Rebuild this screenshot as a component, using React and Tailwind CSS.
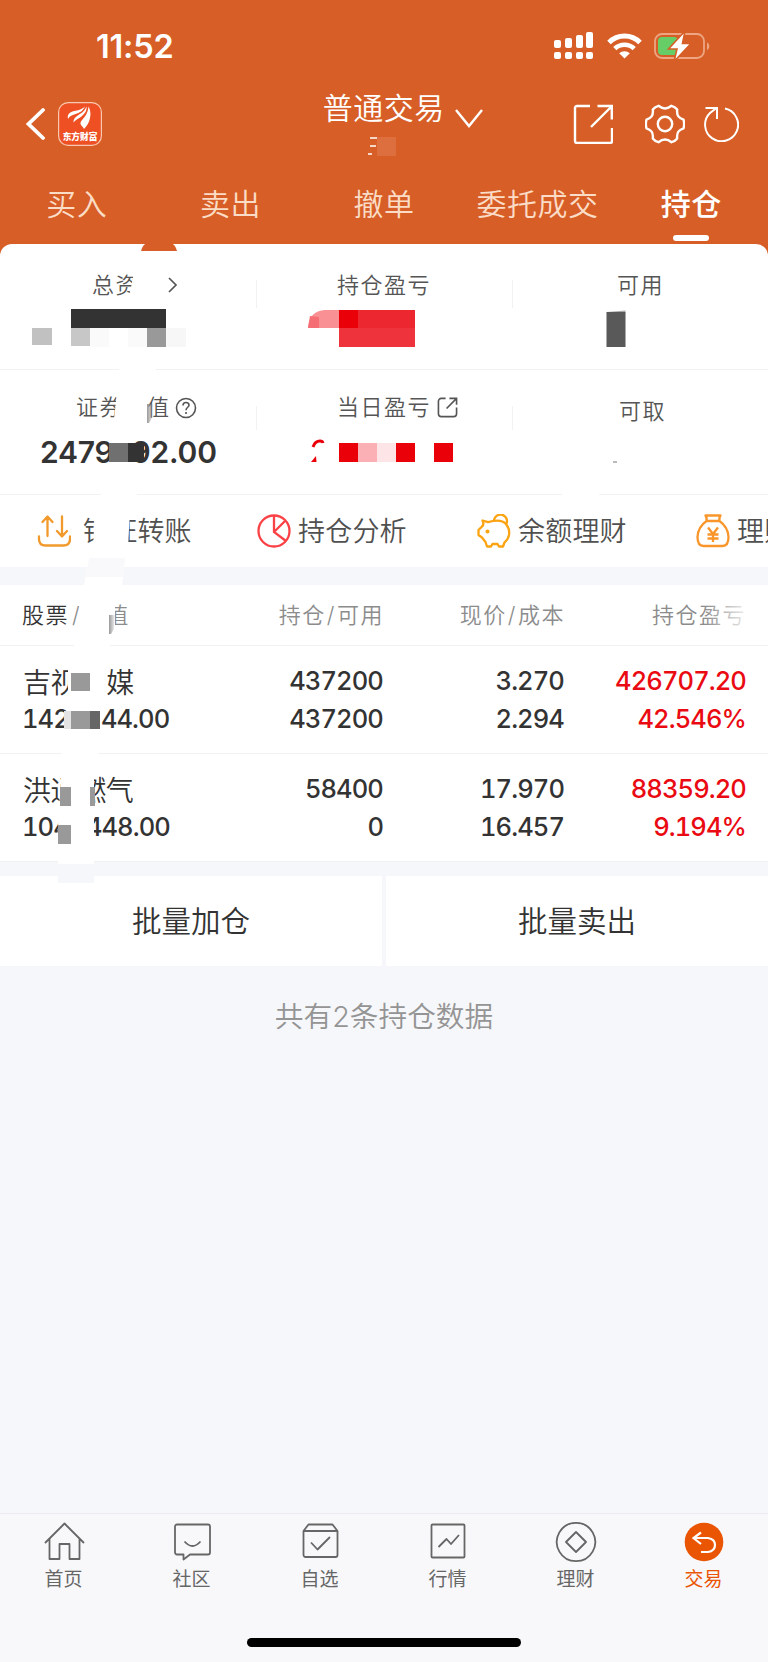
import React from 'react';

const TABS = ['买入', '卖出', '撤单', '委托成交', '持仓'];

const HOLDINGS = [
  {
    name: ['吉视', '媒'],
    value: ['142', '44.00'],
    amount: '437200',
    available: '437200',
    price: '3.270',
    cost: '2.294',
    profit: '426707.20',
    percent: '42.546%',
  },
  {
    name: ['洪通', '燃气'],
    value: ['104', '448.00'],
    amount: '58400',
    available: '0',
    price: '17.970',
    cost: '16.457',
    profit: '88359.20',
    percent: '9.194%',
  },
];

const StatusBar = () => (
  <div className="flex h-[92px] items-center justify-between pl-[96px] pr-[57px]">
    <div className="pt-[2px] text-[32.5px] font-semibold leading-none tracking-[-0.2px]">11:52</div>
    <div className="flex items-center gap-[12.5px] pb-px">
      <svg className="h-7 w-10" viewBox="0 0 40 28" fill="#fff">
        <rect x="0" y="8" width="7" height="8" rx="2" />
        <rect x="11" y="6" width="7" height="10" rx="2" />
        <rect x="22" y="3" width="7" height="13" rx="2" />
        <rect x="32" y="0" width="7" height="16" rx="2" />
        <rect x="0" y="20" width="7" height="7" rx="2" />
        <rect x="11" y="20" width="7" height="7" rx="2" />
        <rect x="22" y="20" width="7" height="7" rx="2" />
        <rect x="32" y="20" width="7" height="7" rx="2" />
      </svg>
      <svg className="h-[26px] w-[35px]" viewBox="0 0 35 26" fill="none" stroke="#fff">
        <path d="M2 9.5a22 22 0 0 1 31 0" strokeWidth="5" />
        <path d="M7.8 15.6a14 14 0 0 1 19.4 0" strokeWidth="4.6" />
        <path d="M17.5 25.5l-5.3-5.2a7.6 7.6 0 0 1 10.6 0z" fill="#fff" stroke="none" />
      </svg>
      <svg className="h-7 w-[57px] overflow-visible" viewBox="0 0 57 28" fill="none">
        <rect x="1" y="2" width="49" height="24" rx="7" stroke="#EDA582" strokeWidth="1.8" />
        <path d="M53 10.5c3 .8 3 6.7 0 7.5z" fill="#EDA582" />
        <rect x="4" y="5" width="20" height="18" rx="4" fill="#67CE67" />
        <path d="M31 -1L14.5 17H23L20 29.500L37 11.500H28.500z" fill="#fff" stroke="#D75F27" strokeWidth="1.6" />
      </svg>
    </div>
  </div>
);

const AppLogo = () => (
  <svg className="h-11 w-11" viewBox="0 0 44 44">
    <rect x="0.6" y="0.6" width="42.8" height="42.8" rx="9.5" fill="#EE5024" stroke="#F8C8B0" strokeWidth="1.2" />
    <g fill="#fff">
      <path d="M10 17c-1-5 2-7 6-8 4-.8 7-1 11-4.5-2 4-4 5.500-8 7-4 1.300-7 2-9 5.500z" />
      <path d="M15.500 20.500c0-4 2-5.500 5-7.500 4-2.500 6-4 8-8.500.5 4-1.500 7-5 10-3 2.500-6 3-8 6z" />
      <path d="M26 27c-1-3-5-4-3-7.500 2-3 7-7 7.500-15 3 5 2 11 .5 15-1 3-3 5-5 7.500z" />
    </g>
    <text x="22" y="37.500" textAnchor="middle" fontSize="8.700" fontWeight="900" fill="#fff">东方财富</text>
  </svg>
);

const NavBar = () => (
  <div className="-mt-px mb-px flex h-[66px] items-center">
    <div className="flex w-[256px] items-center gap-[13px] pl-[25px]">
      <svg className="h-[34px] w-5" viewBox="0 0 20 34" fill="none" stroke="#fff" strokeWidth="3.8">
        <path d="M18 3L3.500 17l14.500 14" strokeLinecap="round" strokeLinejoin="miter" />
      </svg>
      <AppLogo />
    </div>
    <div className="flex w-[256px] items-start justify-center pb-[29px] pl-[38px]">
      <span className="text-[30px] font-[350] leading-9 tracking-[0.5px]">普通交易</span>
      <svg className="ml-[10.5px] mt-[19px] h-5 w-7" viewBox="0 0 28 20" fill="none" stroke="#fff" strokeWidth="2.4">
        <path d="M1 1l13 16L27 1" />
      </svg>
    </div>
    <div className="flex w-[256px] items-center pl-[61px]">
      <svg className="h-10 w-10" viewBox="0 0 40 40" fill="none" stroke="#fff" strokeWidth="2.4">
        <path d="M17 2H4a2 2 0 0 0-2 2v33a2 2 0 0 0 2 2h33a2 2 0 0 0 2-2V24M24.500 2H38.800V15.500M38.500 2.500L18 23" />
      </svg>
      <svg className="ml-[32px] h-10 w-10" viewBox="0 0 40 40" fill="none" stroke="#fff" strokeWidth="2.4" strokeLinejoin="round">
        <path d="M13.500 1.800Q20 7 26.500 1.800Q30 2.600 32.200 5.500C31.500 12 34 14 38.500 15.700Q39.800 20 38.500 24.300C34 26 31.500 28 32.200 34.500Q30 37.400 26.500 38.200Q20 33 13.500 38.200Q10 37.400 7.800 34.500C8.500 28 6 26 1.500 24.300Q.2 20 1.500 15.700C6 14 8.500 12 7.800 5.500Q10 2.600 13.500 1.800z" />
        <circle cx="20" cy="20" r="7.2" />
      </svg>
      <svg className="ml-[18px] h-9 w-9" viewBox="0 0 36 36" fill="none" stroke="#fff" strokeWidth="2">
        <path d="M22 2.600A16.500 16.500 0 1 1 7 7l6.500-5M2.500 2H14V13" />
      </svg>
    </div>
  </div>
);

const ShareIcon = () => (
  <svg className="ml-[5.5px] h-[21px] w-[21px]" viewBox="0 0 22 22" fill="none" stroke="#555" strokeWidth="1.7">
    <path d="M9 1.500H4.500a3 3 0 0 0-3 3v13a3 3 0 0 0 3 3h13a3 3 0 0 0 3-3V11M13 1.500h7.500V8M20 2L10 12" />
  </svg>
);

const Summary = () => (
  <div className="bg-white text-[22px] font-[350] tracking-[1.5px] text-[#555]">
    <div className="grid h-[126px] grid-cols-3 border-b border-[#f2f2f3]">
      <div className="flex h-[82px] items-center pl-[92px]">
        总资
        <svg className="ml-[28px] h-4 w-3" viewBox="0 0 12 16" fill="none" stroke="#555" strokeWidth="1.7">
          <path d="M2 1l7 7-7 7" />
        </svg>
      </div>
      <div className="flex h-[82px] items-center pl-[81px]">持仓盈亏</div>
      <div className="flex h-[82px] items-center pl-[105px]">可用</div>
    </div>
    <div className="grid h-[125px] grid-cols-3 border-b border-[#f2f2f3]">
      <div>
        <div className="flex h-[75px] items-center pl-[76px]">
          证券<span className="ml-[24px]">值</span>
          <svg className="ml-[4px] h-[22px] w-[22px]" viewBox="0 0 22 22" fill="none" stroke="#555" strokeWidth="1.6">
            <circle cx="11" cy="11" r="9.5" />
            <path d="M8 8.500q0-3 3-3t3 2.700c0 2-3 2.200-3 5M11 15v2" />
          </svg>
        </div>
        <div className="flex items-center pl-[40px] text-[30px] font-semibold leading-[14px] tracking-[-0.2px] text-[#333]">
          <span>2479</span>
          <span className="ml-[18px]">92.00</span>
        </div>
      </div>
      <div className="flex h-[75px] items-center pl-[81px]">
        当日盈亏
        <ShareIcon />
      </div>
      <div className="flex h-[82px] items-center pl-[107px]">可取</div>
    </div>
  </div>
);

const Actions = () => (
  <div className="flex h-[72px] overflow-hidden whitespace-nowrap bg-white pl-[37px] text-[27px] font-[350] tracking-[0.2px] text-[#505050]">
    <div className="flex w-[220px] shrink-0 items-center">
      <svg className="h-8 w-[34px]" viewBox="0 0 34 32" fill="none" stroke="#F19A2B" strokeWidth="2.3" strokeLinecap="round" strokeLinejoin="round">
        <path d="M10.500 21V2M5.500 7l5-5.500 5 5.500M25 1.500V21M20 16l5 5.500 5-5.500M2 21.500v2.500q0 6.500 6.500 6.500h18q6.500 0 6.500-6.500v-2.500" />
      </svg>
      <span className="ml-[12px] pt-[3px]">银证转账</span>
    </div>
    <div className="flex w-[219px] shrink-0 items-center">
      <svg className="h-[34px] w-[34px]" viewBox="0 0 34 34" fill="none" stroke="#FA4246" strokeWidth="2.3">
        <circle cx="17" cy="17" r="15.5" />
        <path d="M17 1.500V18l12 9M17 18L28 7" />
      </svg>
      <span className="ml-[7px] pt-[3px]">持仓分析</span>
    </div>
    <div className="flex w-[219px] shrink-0 items-center pl-px">
      <svg className="h-[34px] w-[34px]" viewBox="0 0 34 34" fill="none" stroke="#FBA311" strokeWidth="2.3" strokeLinejoin="round">
        <path d="M5.500 6.500l5.500 1.700Q24 4.500 29 10q4 5 3 11-1 5-4.500 7.500L26 32.500h-4l-1.500-2.500h-5L14 32.500h-4L8.500 28 5 23.500 1.500 21v-5L5 12.500q2.500-2 .5-6z" />
        <path d="M17 7a6.500 6.500 0 1 1 12 3.500" />
        <circle cx="10.500" cy="17.500" r="0.9" fill="#FBA311" />
      </svg>
      <span className="ml-[7px] pt-[3px]">余额理财</span>
    </div>
    <div className="flex shrink-0 items-center pl-px">
      <svg className="h-[34px] w-[34px]" viewBox="0 0 34 34" fill="none" stroke="#F9962B" strokeWidth="2.3" strokeLinejoin="round">
        <path d="M9.500 1.500h15q-1.500 2-1 5.500h-13q.5-3.500-1-5.500zM10.500 7Q2 13 1.500 23q0 9 6 9h19q6 0 6-9Q32 13 23.500 7M12 13.500l5 6.500 5-6.500M17 20v8M11.500 20.500h11M11.500 24.500h11" />
      </svg>
      <span className="ml-[7px] pt-[3px]">理财</span>
    </div>
  </div>
);

const HoldingRow = ({ item }) => (
  <div className="grid h-[108px] grid-cols-[200px_183px_181px_182px] border-b border-[#f2f2f3] pt-[16px] text-right text-[25.5px] font-medium tabular-nums leading-[38px] tracking-[-0.9px] text-[#333]">
    <div className="pl-[22px] text-left">
      <div className="flex pl-px pt-1 text-[28px] font-[350] leading-[34px] tracking-[-0.4px]">
        <span>{item.name[0]}</span>
        <span className={item.name[1].length > 1 ? 'ml-0' : 'ml-[28px]'}>{item.name[1]}</span>
      </div>
      <div className="flex">
        <span>{item.value[0]}</span>
        <span className={item.value[1].length > 5 ? 'ml-[17px]' : 'ml-[32px]'}>{item.value[1]}</span>
      </div>
    </div>
    <div>
      <div>{item.amount}</div>
      <div>{item.available}</div>
    </div>
    <div>
      <div>{item.price}</div>
      <div>{item.cost}</div>
    </div>
    <div className="text-[#EA0A12]">
      <div>{item.profit}</div>
      <div>{item.percent}</div>
    </div>
  </div>
);

const Holdings = () => (
  <div className="mt-[18px] bg-white">
    <div className="grid h-[61px] grid-cols-[200px_184px_181px_181px] items-center border-b border-[#f2f2f3] text-right text-[22px] font-[350] tracking-[1.5px] text-[#8c8c8c]">
      <div className="flex pl-[22px]">
        <span className="text-[#333]">股票</span>
        <span className="ml-[3px]">/</span>
        <span className="ml-[25px]">值</span>
      </div>
      <div>持仓<span className="px-[1px]">/</span>可用</div>
      <div>现价<span className="px-[1px]">/</span>成本</div>
      <div>持仓盈亏</div>
    </div>
    {HOLDINGS.map((item) => (
      <HoldingRow key={item.amount} item={item} />
    ))}
  </div>
);

const ITEMS = [
  { label: '首页', icon: <path d="M1 21L20.500 1.500 40 21M5.500 17v20h10V22h10v15h10V17" /> },
  { label: '社区', icon: <path d="M5 2.500h31a2 2 0 0 1 2 2v26a2 2 0 0 1-2 2H18l-6.500 5v-5H5a2 2 0 0 1-2-2v-26a2 2 0 0 1 2-2zM12.500 19.500q8 9 16 0" /> },
  { label: '自选', icon: <path d="M3.500 9l5-6.500h24l5 6.500v24a2 2 0 0 1-2 2h-30a2 2 0 0 1-2-2zM3.500 9h34M11 20.500l6.500 7L30 15" /> },
  { label: '行情', icon: <path d="M4.500 2.500h31a1 1 0 0 1 1 1v31a1 1 0 0 1-1 1h-31a1 1 0 0 1-1-1v-31a1 1 0 0 1 1-1zM10.500 25l8-8 4.500 5L31 13" /> },
  { label: '理财', icon: <path d="M20 .8a19.200 19.200 0 1 0 .01 0zM20 10l10 10-10 10-10-10z" /> },
  { label: '交易', active: true },
];

const BottomBar = () => (
  <div className="h-[149px] border-t border-[#ececf0] bg-[#f8f8fb]">
    <div className="grid grid-cols-6 pt-[8px]">
      {ITEMS.map((item) => (
        <div key={item.label} className="flex flex-col items-center">
          {item.active ? (
            <svg className="h-10 w-10" viewBox="0 0 40 40" fill="none" stroke="#fff" strokeWidth="2.2">
              <circle cx="20" cy="20" r="19.3" fill="#EA5504" stroke="none" />
              <path d="M17 10.500L9.500 16l7.500 6M10 16h14q7 1 7 7t-7 7h-7" />
            </svg>
          ) : (
            <svg className="h-10 w-[41px] overflow-visible" viewBox="0 0 41 40" fill="none" stroke="#666" strokeWidth="1.8" strokeLinejoin="round">
              {item.icon}
            </svg>
          )}
          <span className={item.active ? 'mr-px mt-[4px] text-[19px] leading-7 text-[#EA5504]' : 'mr-px mt-[4px] text-[19px] leading-7 text-[#666]'}>
            {item.label}
          </span>
        </div>
      ))}
    </div>
    <div className="mx-auto mt-[44px] h-[9px] w-[274px] rounded-full bg-black" />
  </div>
);

// Blocks that hide the private amounts and names
const PrivacyMask = () => (
  <svg className="pointer-events-none absolute left-0 top-0" width="768" height="1662" viewBox="0 0 768 1662" fill="none">
    <defs>
      <linearGradient id="fade" x1="0" x2="1">
        <stop offset="0" stopColor="#fff" stopOpacity="0" />
        <stop offset="1" stopColor="#fff" stopOpacity="0.95" />
      </linearGradient>
      <linearGradient id="edge" x1="0" x2="1">
        <stop offset="0" stopColor="#999" />
        <stop offset="1" stopColor="#999" stopOpacity="0.1" />
      </linearGradient>
    </defs>
    <path d="M370 138h16M370 146h6M368 154h4" stroke="#fff" strokeWidth="1.6" />
    <rect x="377" y="137" width="19" height="19" fill="#DC6F3D" />
    <path d="M141 251q2-7 6-8h24q4 1 6 8z" fill="#D75F27" />

    <path d="M134 272h15v26h-20z" fill="#fff" />
    <rect x="71" y="309" width="95" height="19" fill="#333" />
    <rect x="32" y="328" width="20" height="17" fill="#c1c1c1" />
    <rect x="71" y="328" width="19" height="18" fill="#c7c7c7" />
    <rect x="90" y="328" width="19" height="19" fill="#fafafa" />
    <rect x="128" y="328" width="19" height="19" fill="#fafafa" />
    <rect x="147" y="328" width="19" height="19" fill="#999" />
    <rect x="166" y="328" width="20" height="19" fill="#f7f7f7" />
    <path d="M308 328q1-17 17-18h14v18z" fill="#F99094" />
    <path d="M308 328l2-12 9 1v11z" fill="#F56E74" />
    <rect x="339" y="310" width="19" height="18" fill="#EA0009" />
    <rect x="358" y="310" width="57" height="18" fill="#EC272F" />
    <rect x="339" y="328" width="76" height="19" fill="#EF333D" />
    <path d="M606.500 312l19-1.500v2h-19z" fill="#aaa" />
    <rect x="606.500" y="312" width="19" height="35" fill="#595959" />
    <rect x="119" y="368" width="37" height="4" fill="#fff" />

    <path d="M117 392h27v36h-31z" fill="#fff" />
    <path d="M147 404h6l-1 14-3 5h-2z" fill="url(#edge)" />
    <rect x="109" y="443" width="19" height="19" fill="#707070" />
    <rect x="128" y="443" width="16" height="19" fill="#333" />
    <path d="M313 447q2-6 7-6 2.500 0 3 2" stroke="#EA0009" strokeWidth="3" />
    <path d="M311 462l5-6 .5 6z" fill="#EA0009" />
    <rect x="339" y="443" width="19" height="19" fill="#EA0009" />
    <rect x="358" y="443" width="19" height="19" fill="#FAB0B5" />
    <rect x="377" y="443" width="19" height="19" fill="#FDE4E6" />
    <rect x="396" y="443" width="19" height="19" fill="#EA0009" />
    <rect x="434" y="443" width="19" height="19" fill="#EA0009" />
    <path d="M613 462h4" stroke="#bbb" strokeWidth="2" />
    <path d="M256.500 280v28M512.500 280v28M256.500 406v24M512.500 406v24" stroke="#f2f2f3" />
    <path d="M101 493h36v4h-36zM562 493h37v4h-37z" fill="#fff" />

    <path d="M95 510h35l-2 38H93z" fill="#fff" />
    <path d="M89 558h36l-3 27H84z" fill="#fff" />
    <path d="M89 558h36l-2 19H86z" fill="#f9f9fc" />
    <path d="M80 600h35v30H78z" fill="#fff" />
    <path d="M109 615h6l-1 14-3 5h-2z" fill="url(#edge)" />
    <rect x="704" y="600" width="48" height="32" fill="url(#fade)" />
    <rect x="74" y="643" width="36" height="4" fill="#fff" />

    <rect x="68" y="668" width="36" height="32" fill="#fff" />
    <rect x="71" y="673" width="19" height="18" fill="#999" />
    <rect x="64" y="711" width="7" height="18" fill="#e3e3e3" />
    <rect x="71" y="711" width="19" height="18" fill="#999" />
    <rect x="90" y="711" width="10" height="18" fill="#666" />
    <rect x="62" y="751" width="36" height="4" fill="#fff" />
    <path d="M61 776h33v68H57z" fill="#fff" />
    <rect x="60" y="787" width="11" height="19" fill="#999" />
    <rect x="90" y="787" width="5" height="19" fill="#999" />
    <rect x="58" y="825" width="13" height="19" fill="#999" />
    <rect x="58" y="859" width="36" height="5" fill="#fff" />
    <rect x="58" y="864" width="36" height="19" fill="#f6f7fa" />
  </svg>
);

const App = () => (
  <div className="relative flex h-[1662px] w-[768px] flex-col overflow-hidden bg-[#f6f7fa] font-['Inter','Noto_Sans_CJK_SC',sans-serif]">
    <div className="h-[260px] shrink-0 bg-[#D75F27] text-white">
      <StatusBar />
      <NavBar />
      <div className="grid h-[86px] grid-cols-5 text-center text-[30px] tracking-[0.5px]">
        {TABS.map((tab) =>
          tab === '持仓' ? (
            <div key={tab} className="flex flex-col items-center pt-[24px] font-medium leading-[44px]">
              {tab}
              <div className="mt-[9px] h-[6px] w-9 rounded-full bg-white" />
            </div>
          ) : (
            <div key={tab} className="pt-[24px] font-[350] leading-[44px] text-[#FBDCC6]">
              {tab}
            </div>
          )
        )}
      </div>
    </div>
    <div className="-mt-4 shrink-0 overflow-hidden rounded-t-[12px]">
      <Summary />
      <Actions />
    </div>
    <Holdings />
    <div className="mt-[14px] flex h-[90px] shrink-0 gap-[4px] text-[29.5px] text-[#333]">
      <div className="flex flex-1 items-center justify-center bg-white font-[350]">批量加仓</div>
      <div className="flex flex-1 items-center justify-center bg-white font-[350]">批量卖出</div>
    </div>
    <div className="mt-[29px] text-center text-[28.7px] font-[350] leading-[44px] text-[#949494]">共有2条持仓数据</div>
    <div className="mt-auto">
      <BottomBar />
    </div>
    <PrivacyMask />
  </div>
);

export default App;
